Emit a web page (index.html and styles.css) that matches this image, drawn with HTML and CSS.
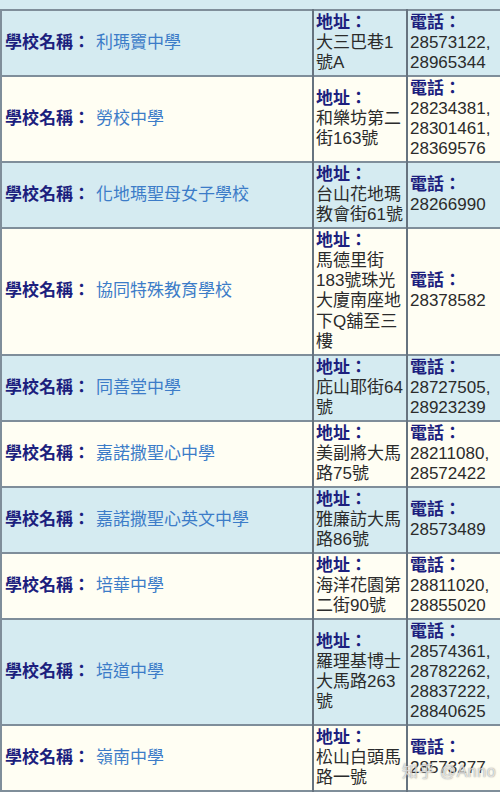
FILE: index.html
```html
<!DOCTYPE html>
<html lang="zh-Hant">
<head>
<meta charset="utf-8">
<link rel="stylesheet" href="styles.css">
</head>
<body>
<div class="page">
  <div class="strip"></div>
  <table class="schools">
    <colgroup><col class="c1"><col class="c2"><col class="c3"></colgroup>
    <tr class="blue">
      <td class="name"><span class="lbl">學校名稱：</span><span class="sch">利瑪竇中學</span></td>
      <td><span class="lbl">地址：</span><br>大三巴巷1號A</td>
      <td><span class="lbl">電話：</span><br>28573122, 28965344</td>
    </tr>
    <tr class="cream">
      <td class="name"><span class="lbl">學校名稱：</span><span class="sch">勞校中學</span></td>
      <td><span class="lbl">地址：</span><br>和樂坊第二街163號</td>
      <td><span class="lbl">電話：</span><br>28234381, 28301461, 28369576</td>
    </tr>
    <tr class="blue">
      <td class="name"><span class="lbl">學校名稱：</span><span class="sch">化地瑪聖母女子學校</span></td>
      <td><span class="lbl">地址：</span><br>台山花地瑪教會街61號</td>
      <td><span class="lbl">電話：</span><br>28266990</td>
    </tr>
    <tr class="cream">
      <td class="name"><span class="lbl">學校名稱：</span><span class="sch">協同特殊教育學校</span></td>
      <td><span class="lbl">地址：</span><br>馬德里街183號珠光大廈南座地下Q舖至三樓</td>
      <td><span class="lbl">電話：</span><br>28378582</td>
    </tr>
    <tr class="blue">
      <td class="name"><span class="lbl">學校名稱：</span><span class="sch">同善堂中學</span></td>
      <td><span class="lbl">地址：</span><br>庇山耶街64號</td>
      <td><span class="lbl">電話：</span><br>28727505, 28923239</td>
    </tr>
    <tr class="cream">
      <td class="name"><span class="lbl">學校名稱：</span><span class="sch">嘉諾撒聖心中學</span></td>
      <td><span class="lbl">地址：</span><br>美副將大馬路75號</td>
      <td><span class="lbl">電話：</span><br>28211080, 28572422</td>
    </tr>
    <tr class="blue">
      <td class="name"><span class="lbl">學校名稱：</span><span class="sch">嘉諾撒聖心英文中學</span></td>
      <td><span class="lbl">地址：</span><br>雅廉訪大馬路86號</td>
      <td><span class="lbl">電話：</span><br>28573489</td>
    </tr>
    <tr class="cream">
      <td class="name"><span class="lbl">學校名稱：</span><span class="sch">培華中學</span></td>
      <td><span class="lbl">地址：</span><br>海洋花園第二街90號</td>
      <td><span class="lbl">電話：</span><br>28811020, 28855020</td>
    </tr>
    <tr class="blue">
      <td class="name"><span class="lbl">學校名稱：</span><span class="sch">培道中學</span></td>
      <td><span class="lbl">地址：</span><br>羅理基博士大馬路263號</td>
      <td><span class="lbl">電話：</span><br>28574361, 28782262, 28837222, 28840625</td>
    </tr>
    <tr class="cream">
      <td class="name"><span class="lbl">學校名稱：</span><span class="sch">嶺南中學</span></td>
      <td><span class="lbl">地址：</span><br>松山白頭馬路一號</td>
      <td><span class="lbl">電話：</span><br>28573277</td>
    </tr>
  </table>
  <div class="watermark">知乎 @Anno</div>
</div>
</body>
</html>
```

FILE: styles.css
```css
html, body {
  margin: 0;
  padding: 0;
  background: #d5ebf1;
}
body {
  font-family: "Liberation Sans", "Noto Sans CJK TC", sans-serif;
  font-size: 17px;
  line-height: 20.1px;
  color: #2b2b2b;
}
.page {
  position: relative;
  width: 500px;
  height: 792px;
  overflow: hidden;
}
.strip {
  height: 9px;
  background: #d5ebf1;
}
.schools {
  width: 500px;
  border-collapse: collapse;
  table-layout: fixed;
  border-left: 2px solid #7f8e9a;
}
.c1 { width: 312px; }
.c2 { width: 94px; }
.c3 { width: 94px; }
.schools tr {
  border-top: 2px solid #7f8e9a;
  border-bottom: 2px solid #7f8e9a;
}
.schools td {
  padding: 1.9px 1px 1.9px 2px;
  vertical-align: middle;
  border-left: 2px solid #66737f;
}
.schools td.name {
  padding-left: 3px;
  border-left: 2px solid #7f8e9a;
}
.blue { background: #d5ebf1; }
.cream { background: #fffef3; }
.lbl {
  color: #1c1f7e;
  font-weight: bold;
}
.sch {
  color: #3c7cc8;
  margin-left: 6px;
}
.watermark {
  position: absolute;
  left: 402px;
  top: 762px;
  font-size: 16px;
  color: rgba(255, 255, 255, 0.7);
  text-shadow: 0 0 1px rgba(90, 90, 90, 0.6), 0 0 2px rgba(120, 120, 120, 0.4);
  letter-spacing: 0.5px;
}
```
